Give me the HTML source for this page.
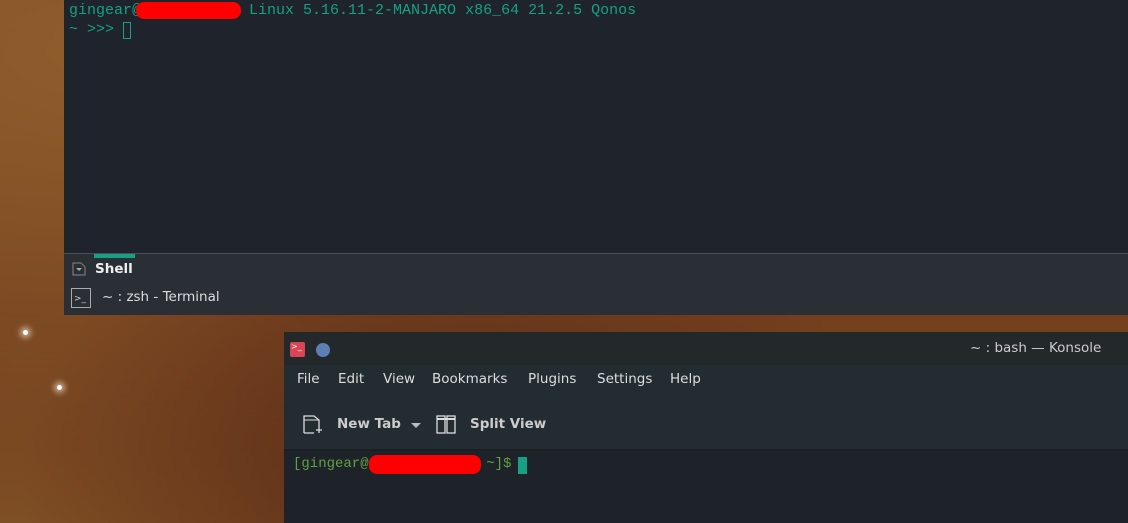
<!DOCTYPE html>
<html><head><style>
*{margin:0;padding:0;box-sizing:border-box}
body{width:1128px;height:523px;overflow:hidden;position:relative;font-family:"DejaVu Sans","Liberation Sans",sans-serif;
background:radial-gradient(ellipse at 40% 90%,#5a2a16 0%,transparent 45%),radial-gradient(ellipse at 10% 10%,#8f5c2c 0%,transparent 60%),linear-gradient(180deg,#7d4c22 0%,#73401e 60%,#7e4e24 100%)}
.mono{font-family:"Liberation Mono","DejaVu Sans Mono",monospace}
#top{position:absolute;left:64px;top:0;width:1064px;height:315px;background:#1f232b;border-radius:0 0 0 3px}
#top .t{position:absolute;left:5px;font-size:15px;color:#16a085;white-space:pre}
.red{position:absolute;background:#f00;border-radius:8px}
#bar{position:absolute;left:0;top:253px;width:1064px;height:62px;background:#2a2e35;border-top:1px solid #4a4f56}
#kon{position:absolute;left:284px;top:332px;width:844px;height:191px;background:#1e2329;border-radius:4px 0 0 0}
.star{position:absolute;background:#fff;border-radius:50%;box-shadow:0 0 6px 3px rgba(255,240,220,.6)}
.m{position:absolute;top:39px;font-size:13.5px;color:#ddd}
</style></head><body>
<div class="star" style="left:23px;top:330px;width:5px;height:5px"></div>
<div class="star" style="left:57px;top:385px;width:5px;height:5px"></div>
<div id="top">
<div class="t mono" style="top:2px">gingear@            Linux 5.16.11-2-MANJARO x86_64 21.2.5 Qonos</div>
<div class="red" style="left:72px;top:2px;width:105px;height:17px"></div>
<div class="t mono" style="top:21px">~ &gt;&gt;&gt; </div>
<div style="position:absolute;left:59px;top:22px;width:8px;height:17px;border:1px solid #16a085"></div>
<div id="bar">
<div style="position:absolute;left:30px;top:0;width:41px;height:4px;background:#16a085"></div>
<svg style="position:absolute;left:8px;top:8px" width="14" height="14" viewBox="0 0 14 14"><path d="M1 1h8l4 4v8H1z" fill="none" stroke="#777" stroke-width="1.2"/><path d="M4 6l3 3 3-3z" fill="#aaa"/></svg>
<div style="position:absolute;left:31px;top:7px;font-size:13.5px;font-weight:bold;color:#eee">Shell</div>
<div style="position:absolute;left:7px;top:34px;width:20px;height:20px;border:1px solid #aaa;font-size:9px;color:#ccc;padding:5px 0 0 2px">&gt;_</div>
<div style="position:absolute;left:38px;top:35px;font-size:13.5px;color:#ddd">~ : zsh - Terminal</div>
</div>
</div>
<div id="kon">
<div style="position:absolute;left:0;top:0;width:844px;height:33px;background:#23282b"></div>
<div style="position:absolute;left:6px;top:10px;width:15px;height:15px;background:#da4453;border-radius:2px;font-size:8px;color:#fff;padding-left:1px">&gt;_</div>
<div style="position:absolute;left:32px;top:11px;width:14px;height:14px;background:#5d7fb3;border-radius:50%"></div>
<div style="position:absolute;left:686px;top:8px;font-size:13.5px;color:#ccc">~ : bash — Konsole</div>
<div style="position:absolute;left:0;top:33px;width:844px;height:86px;background:#232c31;border-bottom:2px solid #1a1f22"></div>
<div class="m" style="left:13px">File</div><div class="m" style="left:54px">Edit</div><div class="m" style="left:99px">View</div><div class="m" style="left:148px">Bookmarks</div><div class="m" style="left:244px">Plugins</div><div class="m" style="left:313px">Settings</div><div class="m" style="left:386px">Help</div>
<svg style="position:absolute;left:19px;top:83px" width="20" height="20" viewBox="0 0 20 20"><path d="M1 18V1h10l5 4v7M1 18h10M13 15h6M16 12v6" fill="none" stroke="#ddd" stroke-width="1.3"/><path d="M1 5h15" stroke="#ddd" stroke-width="1"/></svg>
<div style="position:absolute;left:53px;top:84px;font-size:13.5px;font-weight:bold;color:#ccc">New Tab</div>
<div style="position:absolute;left:127px;top:91px;border:5px solid transparent;border-top:5px solid #bbb"></div>
<svg style="position:absolute;left:152px;top:83px" width="20" height="20" viewBox="0 0 20 20"><rect x="1" y="1" width="8" height="17" fill="none" stroke="#ddd" stroke-width="1.3"/><rect x="11" y="1" width="8" height="17" fill="none" stroke="#ddd" stroke-width="1.3"/><path d="M1 4h18" stroke="#ddd" stroke-width="2"/></svg>
<div style="position:absolute;left:186px;top:84px;font-size:13.5px;font-weight:bold;color:#ccc">Split View</div>
<div class="mono" style="position:absolute;left:9px;top:124px;font-size:14px;color:#5fa040;white-space:pre">[gingear@              ~]$</div>
<div class="red" style="left:85px;top:123px;width:112px;height:19px"></div>
<div style="position:absolute;left:234px;top:125px;width:9px;height:17px;background:#16a085"></div>
</div>
</body></html>
